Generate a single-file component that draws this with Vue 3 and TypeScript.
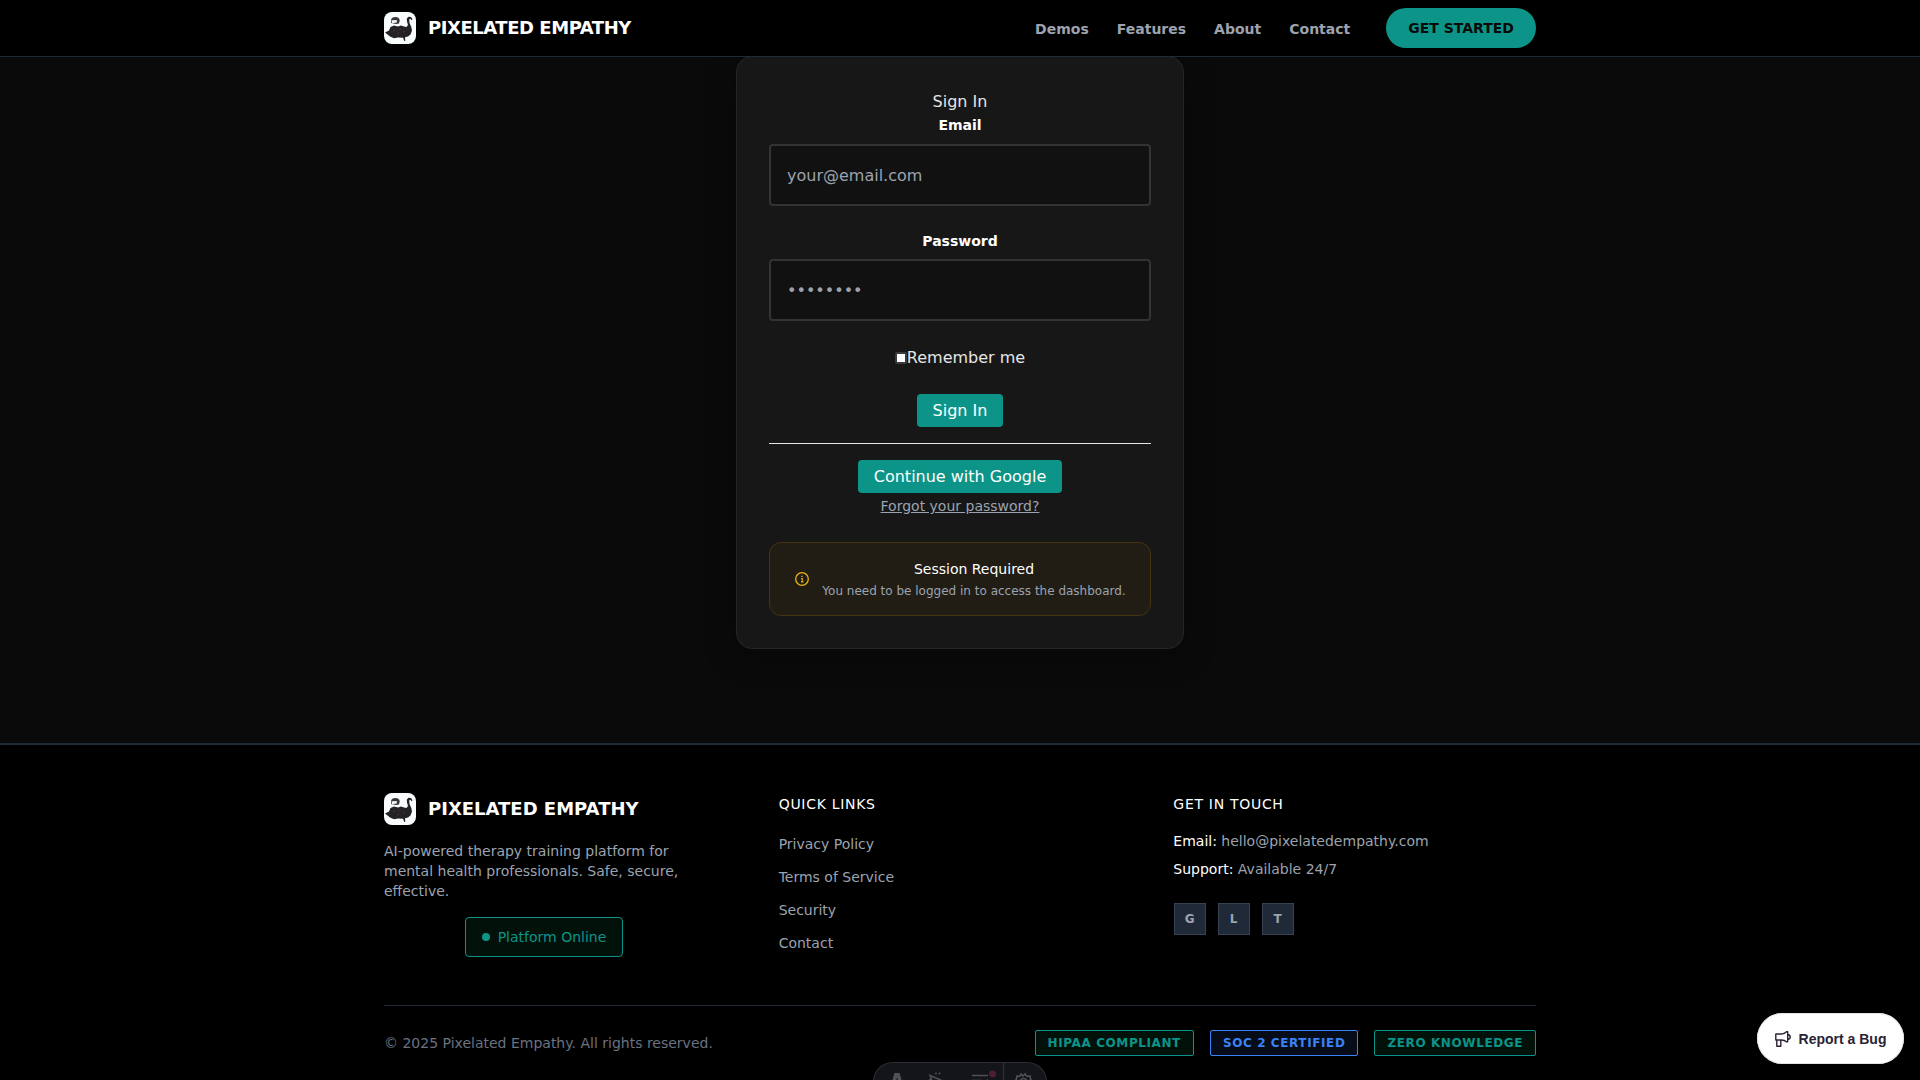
<script setup lang="ts">
import { ref } from 'vue'

interface Badge {
  label: string
  tone: 'teal' | 'blue'
}

const navLinks: string[] = ['Demos', 'Features', 'About', 'Contact']
const quickLinks: string[] = ['Privacy Policy', 'Terms of Service', 'Security', 'Contact']
const socials: string[] = ['G', 'L', 'T']
const badges: Badge[] = [
  { label: 'HIPAA COMPLIANT', tone: 'teal' },
  { label: 'SOC 2 CERTIFIED', tone: 'blue' },
  { label: 'ZERO KNOWLEDGE', tone: 'teal' },
]
const email = ref('')
const password = ref('')
const swan =
  'M1 20.500 5 18.500 6.500 15 10 13.500 14 14.500 17 13.500 20 14.500 22.500 15 24 13 23 9.500 22.800 6.500 24.500 4.800 27 5 28.500 7.300 27.800 8.300 26.300 6.800 25.200 7.500 25.500 11 27.300 15 28 18.500 26.500 22.500 24 24.500 21 25.300 21.300 28.700 20.300 29 19 25.800 14 25.500 10 26.300 6 24.500z'
</script>

<template>
  <div class="page">
    <header class="topbar">
      <div class="container topbar-inner">
        <div class="brand">
          <svg class="logo" viewBox="0 0 32 32">
            <rect width="32" height="32" rx="8" fill="#f8fcfd" />
            <path :d="swan" fill="#242226" />
            <path d="M7 11V8Q7.500 5 11.500 5T15.700 8.500L15 11.500 12 12z" fill="#38363b" />
            <path d="M7.500 8.300 12.800 8V10.500L8 11.300z" fill="#eef3f4" />
            <path d="M9 18l2 1M15 17l2 1M19 20l2-1M13 22l2-1" stroke="#39373b" />
          </svg>
          <span class="brand-name tight">PIXELATED EMPATHY</span>
        </div>
        <nav class="nav">
          <a v-for="link in navLinks" :key="link">{{ link }}</a>
          <button class="cta">GET STARTED</button>
        </nav>
      </div>
    </header>

    <main class="main">
      <section class="card">
        <div class="card-title">Sign In</div>
        <label class="field-label">Email</label>
        <input v-model="email" class="field" type="email" placeholder="your@email.com" />
        <label class="field-label">Password</label>
        <input v-model="password" class="field" type="password" placeholder="••••••••" />
        <div class="remember"><span class="check"></span>Remember me</div>
        <button class="btn">Sign In</button>
        <div class="rule"></div>
        <button class="btn">Continue with Google</button>
        <a class="forgot">Forgot your password?</a>
        <div class="alert">
          <svg class="info" viewBox="0 0 16 16" fill="none" stroke="#eab308">
            <circle cx="8" cy="8" r="6.300" stroke-width="1.300" />
            <path d="M7 7.500H8.200V10.800M7 10.900H9.500" stroke-width="1.100" />
            <path d="M7.300 5.400H8.600" stroke-width="1.300" />
          </svg>
          <div class="alert-text">
            <div class="alert-title">Session Required</div>
            <div class="alert-body">You need to be logged in to access the dashboard.</div>
          </div>
        </div>
      </section>
    </main>

    <footer class="footer">
      <div class="container">
        <div class="columns">
          <div class="col about">
            <div class="brand">
              <svg class="logo" viewBox="0 0 32 32">
                <rect width="32" height="32" rx="8" fill="#f8fcfd" />
                <path :d="swan" fill="#242226" />
                <path d="M7 11V8Q7.500 5 11.500 5T15.700 8.500L15 11.500 12 12z" fill="#38363b" />
                <path d="M7.500 8.300 12.800 8V10.500L8 11.300z" fill="#eef3f4" />
                <path d="M9 18l2 1M15 17l2 1M19 20l2-1M13 22l2-1" stroke="#39373b" />
              </svg>
              <span class="brand-name">PIXELATED EMPATHY</span>
            </div>
            <p class="blurb">AI-powered therapy training platform for mental health professionals. Safe, secure, effective.</p>
            <div class="status"><span class="dot"></span>Platform Online</div>
          </div>
          <div class="col">
            <h3>QUICK LINKS</h3>
            <a v-for="link in quickLinks" :key="link" class="quick">{{ link }}</a>
          </div>
          <div class="col">
            <h3>GET IN TOUCH</h3>
            <div class="contact">
              <p class="touch"><strong>Email:</strong> hello@pixelatedempathy.com</p>
              <p class="touch"><strong>Support:</strong> Available 24/7</p>
              <div class="socials">
                <a v-for="s in socials" :key="s">{{ s }}</a>
              </div>
            </div>
          </div>
        </div>
        <div class="legal">
          <span>© 2025 Pixelated Empathy. All rights reserved.</span>
          <div class="badges">
            <span v-for="b in badges" :key="b.label" class="badge" :class="b.tone">{{ b.label }}</span>
          </div>
        </div>
      </div>
    </footer>

    <div class="devbar">
      <svg width="174" height="40" viewBox="0 0 174 40" fill="none" stroke="#505056" stroke-width="1.600">
        <path d="M17 26 21.500 11H26.500L31 26Q28 24.500 26.800 24L24 15.500 21.500 24Q19 25 17 26z" fill="#505056" stroke="none" />
        <path d="M57 13.500 70 19 64.500 20.500 62 26zM63 10.500V12.500M67 10.500 66 12.500M56 18 58 17.500" />
        <path d="M99 13.500H115M99 18.500H109M112 21 115 17.500" />
        <path d="M130.500 0V40" stroke="#2b2c34" stroke-width="1.500" />
        <path d="M147 14.500 148 12 150 14 152 12 154 14.500 157 14 157.500 17 159 19.500 157 22M147 14.500 144 14 143.500 17 141.500 19.500 143 22" />
        <circle cx="150.500" cy="20" r="3.500" />
        <circle cx="119.500" cy="12" r="3.500" fill="#4a1f31" stroke="none" />
      </svg>
    </div>

    <button class="report">
      <svg width="16" height="16" viewBox="0 0 16 16" fill="none" stroke="#2b2233" stroke-width="1.400" stroke-linejoin="round">
        <path d="M.8 3H6.500Q9.500 3 11.500.8H12.700V10.800H11.500Q9.500 9 6.500 9H.8zM1.800 9V15.200H5.800V9M12.700 3.500Q15.200 3.800 15.200 6T12.700 8.500" />
      </svg>
      <span>Report a Bug</span>
    </button>
  </div>
</template>

<style>
body {
  margin: 0;
  background: #0a0a0a;
}
</style>

<style scoped>
* {
  box-sizing: border-box;
}
.page {
  height: 1080px;
  overflow: hidden;
  position: relative;
  display: flex;
  flex-direction: column;
  background: #0a0a0a;
  color: #e5e5e5;
  font: 16px/24px 'DejaVu Sans', sans-serif;
}
button {
  border: 0;
  font-family: inherit;
}
.container {
  width: 1152px;
  margin: 0 auto;
}
.topbar {
  height: 57px;
  flex: none;
  background: #000;
  border-bottom: 1px solid #1f2937;
  position: relative;
  z-index: 2;
}
.topbar-inner {
  height: 56px;
  display: flex;
  align-items: center;
  justify-content: space-between;
}
.brand {
  height: 32px;
  display: flex;
  align-items: center;
  gap: 12px;
}
.logo {
  width: 32px;
  height: 32px;
}
.brand-name {
  font-size: 18px;
  font-weight: 700;
  line-height: 28px;
  color: #fff;
}
.tight {
  letter-spacing: -0.45px;
}
.nav {
  display: flex;
  align-items: center;
  gap: 28px;
  font-size: 14px;
  font-weight: 600;
  color: #9ca3af;
}
.nav a {
  padding-top: 1px;
}
.cta {
  height: 40px;
  margin-left: 8px;
  padding: 0 22px;
  border-radius: 20px;
  background: #0d9488;
  color: #0a0a0a;
  font-size: 14px;
  font-weight: 600;
}
.main {
  height: 686px;
  flex: none;
  display: flex;
  justify-content: center;
  align-items: flex-start;
}
.card {
  width: 448px;
  height: 593px;
  margin-top: -1px;
  padding: 32px;
  border: 1px solid #262626;
  border-radius: 16px;
  background: #171717;
  box-shadow: 0 8px 32px rgba(0, 0, 0, 0.3);
  display: flex;
  flex-direction: column;
  align-items: center;
}
.card-title {
  height: 24px;
  padding-top: 1px;
}
.field-label {
  margin-bottom: 6.5px;
  font-size: 14px;
  font-weight: 600;
  color: #fff;
}
.field {
  width: 382px;
  height: 62px;
  flex: none;
  margin: 0 0 23px;
  padding: 1px 16px 0;
  border: 2px solid #333;
  border-radius: 4px;
  background: #111;
  color: #fff;
  font: inherit;
  outline: 0;
}
.field::placeholder {
  color: #9ca3af;
  opacity: 1;
}
.remember {
  display: flex;
  align-items: center;
  margin: 2px 0 24px;
}
.check {
  width: 12px;
  height: 12px;
  border: 2px solid #3b3b3b;
  border-radius: 2px;
  background: #fff;
}
.btn {
  height: 33px;
  flex: none;
  padding: 0 16px;
  border-radius: 4px;
  background: #0d9488;
  color: #fff;
  font-size: 16px;
}
.rule {
  width: 100%;
  height: 1px;
  flex: none;
  margin: 16px 0;
  background: #e5e5e5;
}
.forgot {
  margin-top: 1px;
  font-size: 14px;
  color: #9ca3af;
  text-decoration: underline;
}
.alert {
  width: 100%;
  height: 74px;
  margin-top: auto;
  padding: 0 24px;
  border: 1px solid #433512;
  border-radius: 12px;
  background: #211d15;
  display: flex;
  align-items: center;
  gap: 12px;
}
.info {
  width: 16px;
  height: 16px;
  flex: none;
}
.alert-text {
  flex: 1;
  text-align: center;
  white-space: nowrap;
}
.alert-title {
  padding-top: 1px;
  font-size: 14px;
  line-height: 20px;
  font-weight: 500;
  color: #fff;
}
.alert-body {
  margin-top: 3px;
  font-size: 12px;
  line-height: 18px;
  color: #9ca3af;
}
.footer {
  height: 337px;
  flex: none;
  border-top: 2px solid #1f2937;
  background: #000;
  padding-top: 48px;
  font-size: 14px;
  line-height: 20px;
  color: #9ca3af;
}
.columns {
  height: 213px;
  display: grid;
  grid-template-columns: repeat(3, 1fr);
  gap: 32px;
  border-bottom: 1px solid #1f2937;
}
.col {
  display: flex;
  flex-direction: column;
  align-items: flex-start;
}
.about {
  width: 320px;
}
.blurb {
  margin: 16px 0;
}
.status {
  height: 40px;
  align-self: center;
  display: flex;
  align-items: center;
  gap: 8px;
  padding: 0 16px;
  border: 1px solid #0d9488;
  border-radius: 4px;
  background: #02120b;
  color: #0d9488;
}
.dot {
  width: 8px;
  height: 8px;
  border-radius: 50%;
  background: #0d9488;
}
h3 {
  margin: 1px 0 16px;
  font-size: 14px;
  line-height: 20px;
  font-weight: 500;
  letter-spacing: 0.7px;
  color: #fff;
}
.quick {
  height: 33px;
  padding-top: 4px;
}
.contact {
  padding-top: 1px;
}
.touch {
  margin: 0 0 8px;
}
.touch strong {
  font-weight: 500;
  color: #fff;
}
.socials {
  display: flex;
  gap: 12px;
  margin-top: 24px;
  padding-left: 0.3px;
}
.socials a {
  width: 32px;
  height: 32px;
  display: flex;
  align-items: center;
  justify-content: center;
  border: 1px solid #374151;
  background: #1f2937;
  font-size: 12px;
  font-weight: 700;
}
.legal {
  height: 74px;
  display: flex;
  align-items: center;
  justify-content: space-between;
  color: #6b7280;
}
.badges {
  display: flex;
  gap: 16px;
}
.badge {
  height: 26px;
  padding: 0 12px;
  border: 1px solid;
  border-radius: 2px;
  font-size: 12px;
  line-height: 24px;
  font-weight: 600;
  letter-spacing: 0.6px;
}
.teal {
  color: #0d9488;
  background: #02120b;
}
.blue {
  color: #3b82f6;
  background: #060d18;
}
.devbar {
  position: absolute;
  left: 873px;
  top: 1062px;
  width: 174px;
  height: 40px;
  border-radius: 20px;
  background: #13151a;
  box-shadow: inset 0 0 0 1px #2b2c34;
}
.report {
  position: absolute;
  left: 1757px;
  top: 1013px;
  width: 147px;
  height: 51px;
  border-radius: 26px;
  background: #fff;
  box-shadow: inset 0 0 0 1px #e4e2e6;
  display: flex;
  align-items: center;
  justify-content: center;
  gap: 8px;
  padding: 0;
  color: #2b2233;
  font: 600 14px/20px 'Liberation Sans', sans-serif;
}
</style>
